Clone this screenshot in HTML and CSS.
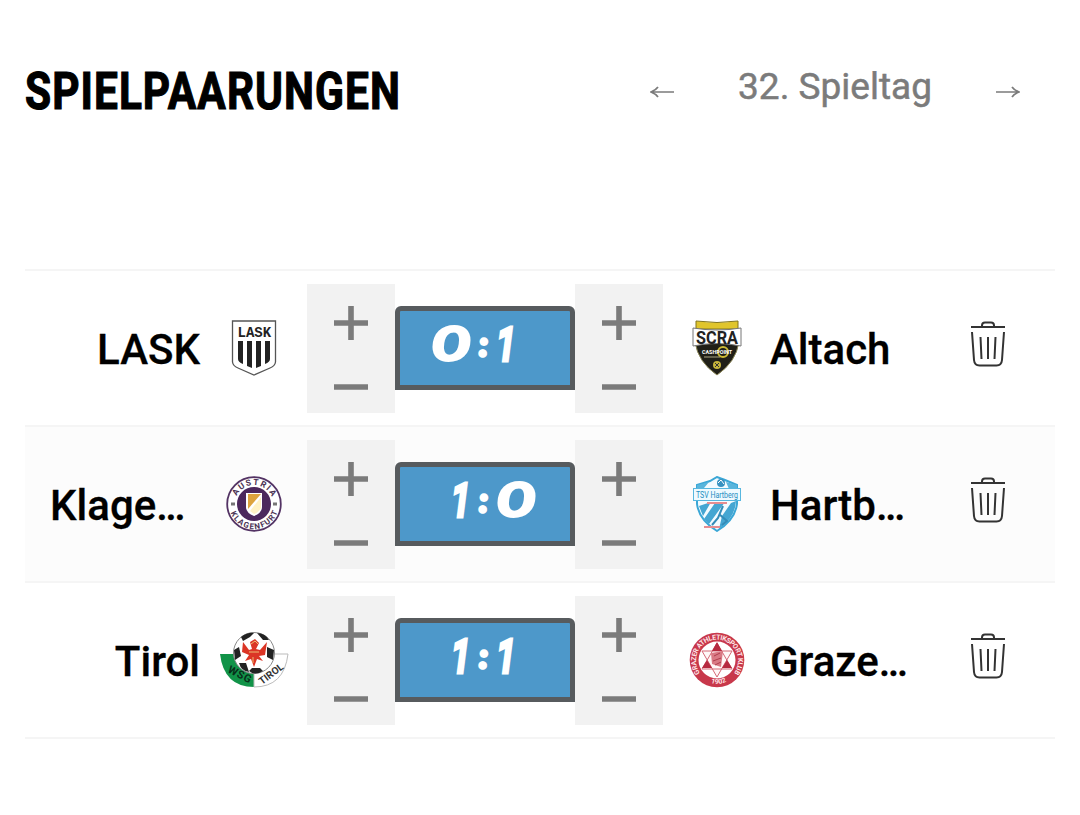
FILE: index.html
```
<!DOCTYPE html>
<html lang="de">
<head>
  <meta charset="UTF-8">
  <title>Spielpaarungen</title>
  <link rel="stylesheet" href="styles.css">
</head>
<body>
  <svg class="defs" width="0" height="0">
    <symbol id="plus" viewBox="0 0 34 34"><path d="M17 0V34M0 17H34" stroke="#7b7b7b" stroke-width="5.6"/></symbol>
    <symbol id="minus" viewBox="0 0 34 6"><path d="M0 3H34" stroke="#7b7b7b" stroke-width="5.6"/></symbol>
    <symbol id="trash" viewBox="0 0 36 46">
      <g fill="none" stroke="#333" stroke-width="2">
        <path d="M1 6H35M12 6V4.500Q12 1.500 15 1.500H21Q24 1.500 24 4.500V6"/>
        <path d="M2 11L4 39Q4.500 44.500 9.500 44.500H26.500Q31.500 44.500 32 39L34 11M10.500 16L11.500 38M18 16V38M25.500 16L24.500 38"/>
      </g>
    </symbol>
  </svg>

  <header class="header">
    <h1><span>SPIELPAARUNGEN</span></h1>
    <nav class="matchday">
      <svg class="arrow" viewBox="0 0 25 14"><path d="M24 7H2M8 2Q6 5 1 7Q6 9 8 12"/></svg>
      <span class="day">32. Spieltag</span>
      <svg class="arrow" viewBox="0 0 25 14"><path d="M1 7H23M17 2Q19 5 24 7Q19 9 17 12"/></svg>
    </nav>
  </header>

  <main class="games">
    <div class="game">
      <div class="team home">LASK</div>
      <svg class="logo" viewBox="0 0 70 56">
        <path d="M13.500 1H56.500V42Q56 46 51 48L35 55L19 48Q14 46 13.500 42Z" fill="#fff" stroke="#555" stroke-width="1.300"/>
        <text x="18.500" y="16.500" font-size="14" class="lask-text" fill="#222">LASK</text>
        <path d="M19 21H24V44Q19 42 19 39ZM28 21H33V48L28 46ZM37 21H42V46L37 48ZM46 21H51V39Q51 42 46 44Z" fill="#222"/>
      </svg>
      <div class="control"><button><svg class="plus"><use href="#plus"/></svg></button><button><svg class="minus"><use href="#minus"/></svg></button></div>
      <div class="score"><span class="zero left">0</span><span class="colon">:</span><span class="one">1</span></div>
      <div class="control"><button><svg class="plus"><use href="#plus"/></svg></button><button><svg class="minus"><use href="#minus"/></svg></button></div>
      <svg class="logo" viewBox="0 0 70 56">
        <path d="M14 1Q35 4 56 1V9H14Z" fill="#e0c52c" stroke="#81751d"/>
        <path d="M13 22H57Q54 42 35 55Q16 42 13 22Z" fill="#201f17" stroke="#8b8655"/>
        <path d="M11 8Q35 12 59 8V26Q35 21 11 26Z" fill="#fff" stroke="#777"/>
        <text x="14" y="24" font-size="18" textLength="42" lengthAdjust="spacingAndGlyphs" fill="#222">SCRA</text>
        <circle cx="41" cy="32" r="5" fill="none" stroke="#cdbb35" stroke-width="2"/>
        <path d="M22 37H38" stroke="#aaa684"/>
        <text x="20" y="34" font-size="6" textLength="30" lengthAdjust="spacingAndGlyphs" fill="#fff">CASHPOINT</text>
        <circle cx="35" cy="45" r="4" fill="#c7b43b"/><path d="M33 43L37 47M37 43L33 47" stroke="#333"/>
      </svg>
      <div class="team away">Altach</div>
      <button class="delete"><svg><use href="#trash"/></svg></button>
    </div>

    <div class="game">
      <div class="team home cut">Klage<span class="dots">...</span></div>
      <svg class="logo" viewBox="0 0 70 56">
        <defs>
          <path id="klag-top" d="M16 28A19 19 0 0 1 54 28"/>
          <path id="klag-bottom" d="M10 28A25 25 0 0 0 60 28"/>
        </defs>
        <circle cx="35" cy="28" r="26.800" fill="#fff" stroke="#533364" stroke-width="1.800"/>
        <circle cx="35" cy="28" r="17" fill="#4c285d"/>
        <path d="M27 17H43V31Q43 37 35 40Q27 37 27 31Z" fill="#fff"/>
        <path d="M29 18H42L29 33Z" fill="#dda33e"/><path d="M31 35L42 21V32Q39 37 35 38Z" fill="#fff2c5"/>
        <g font-size="8.500" fill="#4c3454">
          <text><textPath href="#klag-top" startOffset="8" textLength="44">AUSTRIA</textPath></text>
          <text font-size="8"><textPath href="#klag-bottom" startOffset="9" textLength="61">KLAGENFURT</textPath></text>
        </g>
        <path d="M12 28H16M54 28H58" stroke="#777" stroke-width="3"/>
      </svg>
      <div class="control"><button><svg class="plus"><use href="#plus"/></svg></button><button><svg class="minus"><use href="#minus"/></svg></button></div>
      <div class="score"><span class="one left">1</span><span class="colon">:</span><span class="zero">0</span></div>
      <div class="control"><button><svg class="plus"><use href="#plus"/></svg></button><button><svg class="minus"><use href="#minus"/></svg></button></div>
      <svg class="logo" viewBox="0 0 70 56">
        <path d="M15 9L28 5L35 1L43 4L55 9V28Q53 44 35 55Q17 44 15 28Z" fill="#f3fbff" stroke="#3ba7d6" stroke-width="2"/>
        <path d="M15 9L27 6L22 12H15ZM44 6L55 9V13H47Z" fill="#59b5dc"/>
        <circle cx="39" cy="7" r="4" fill="#3792c1"/><path d="M36 7L39 4L42 8" stroke="#fff" fill="none"/>
        <path d="M17 30L29 26L21 40ZM33 27L43 26L27 48L22 43ZM49 27L54 25Q53 42 37 53L40 40Z" fill="#45a6d2"/>
        <path d="M41 30L36 42L30 49M37 38L45 45L40 49" fill="none" stroke="#348cb8" stroke-width="2"/>
        <rect x="11.500" y="12.500" width="47" height="12" fill="#eefaff" stroke="#58b7df"/>
        <text x="14" y="22" font-size="8.500" textLength="42" lengthAdjust="spacingAndGlyphs" class="regular" fill="#238dc1">TSV Hartberg</text>
        <path d="M25 27H45M22 51H38" stroke="#e58d91" stroke-width="1.800"/>
      </svg>
      <div class="team away">Hartb<span class="dots">...</span></div>
      <button class="delete"><svg><use href="#trash"/></svg></button>
    </div>

    <div class="game">
      <div class="team home">Tirol</div>
      <svg class="logo" viewBox="0 0 70 56">
        <path d="M1 22H35V55Q5 55 1 22Z" fill="#119348"/>
        <path d="M35 22H69Q65 55 35 55Z" fill="#fff" stroke="#bbb"/>
        <circle cx="35" cy="21" r="20.500" fill="#fff" stroke="#888"/>
        <path d="M22 5Q29 0 35 1L31 5L24 9ZM38 1Q46 1 50 8L44 8ZM15 18L20 15L22 24L16 28ZM48 15L55 18L54 28L48 25ZM20 31L27 31L30 40Q22 39 20 31ZM33 36L41 36L44 39Q36 44 30 39Z" fill="#222"/>
        <path d="M24 10L30 18L33 17L31 10L36 7L40 11L37 17L41 18L48 10L46 23L40 24L44 29L38 27L35 35L32 27L26 29L30 23L23 20Z" fill="#db3525"/>
        <path d="M32 12L36 9L39 12M30 20H40M34 25V31" fill="none" stroke="#edbb70"/>
        <text x="8" y="40" font-size="11" transform="rotate(27 8 40)" textLength="25" fill="#072f1a">WSG</text>
        <text x="43" y="53" font-size="10" transform="rotate(-37 43 53)" textLength="28" fill="#333">TIROL</text>
      </svg>
      <div class="control"><button><svg class="plus"><use href="#plus"/></svg></button><button><svg class="minus"><use href="#minus"/></svg></button></div>
      <div class="score"><span class="one left">1</span><span class="colon">:</span><span class="one">1</span></div>
      <div class="control"><button><svg class="plus"><use href="#plus"/></svg></button><button><svg class="minus"><use href="#minus"/></svg></button></div>
      <svg class="logo" viewBox="0 0 70 56">
        <defs><path id="gak-ring" d="M18 41A21 21 0 1 1 52 41"/><path id="gak-year" d="M20 46Q35 58 50 46"/></defs>
        <circle cx="35" cy="28" r="27.300" fill="#c8384b"/>
        <circle cx="35" cy="28" r="18.500" fill="#fff"/>
        <path d="M35 11L50 37H20ZM35 45L20 19H50Z" fill="#fff7f7" stroke="#d46876"/>
        <path d="M35 10L40 19H30ZM20 36L25 28L30 36ZM40 36L45 28L50 36Z" fill="#b62a40"/>
        <path d="M29 21L41 19L39 35L30 32Z" fill="#d97984"/>
        <path d="M32 24L38 21M31 29L39 26M33 33L39 30" stroke="#ae3d4d"/>
        <g font-size="7" fill="#ffe6e8"><text><textPath href="#gak-ring" textLength="92">GRAZER ATHLETIKSPORT KLUB</textPath></text><text><textPath href="#gak-year" startOffset="10">1902</textPath></text></g>
      </svg>
      <div class="team away">Graze<span class="dots">...</span></div>
      <button class="delete"><svg><use href="#trash"/></svg></button>
    </div>
  </main>
</body>
</html>
```
FILE: styles.css
```
* {
  box-sizing: border-box;
}
body {
  margin: 0;
  padding: 0 25px;
  background: #fff;
  color: #000;
  font-family: Roboto, sans-serif;
}
.defs {
  display: block;
}
.header {
  display: flex;
  justify-content: space-between;
  height: 269px;
  padding-top: 61px;
}
h1 {
  width: 380px;
  margin: 0;
  font-size: 52px;
  line-height: 62px;
  font-weight: 700;
}
h1 span {
  display: inline-block;
  transform: scaleX(.815);
  transform-origin: left;
  letter-spacing: 1.3px;
  -webkit-text-stroke: 1.2px #000;
}
.matchday {
  display: flex;
  align-items: center;
  justify-content: space-between;
  width: 370px;
  height: 62px;
  margin-right: 35px;
}
.arrow {
  width: 25px;
  height: 14px;
  fill: none;
  stroke: #7b7b7b;
  stroke-width: 1.7;
}
.day {
  color: #7b7b7b;
  font-size: 37px;
  line-height: 52px;
  padding-bottom: 10px;
  -webkit-text-stroke: .5px #7b7b7b;
}
.game {
  display: grid;
  grid-template-columns: 175px 107px 88px 180px 88px 107px 165px 106px;
  align-items: center;
  height: 156px;
  border-top: 2px solid #f5f5f5;
}
.game:nth-child(even) {
  background: #fcfcfc;
}
.game:last-child {
  height: 158px;
  border-bottom: 2px solid #f5f5f5;
}
.team {
  font-size: 42px;
  line-height: 50px;
  font-weight: 500;
  padding-top: 3px;
  white-space: nowrap;
  -webkit-text-stroke: .3px #000;
}
.home {
  text-align: right;
}
.cut {
  text-align: left;
  padding-left: 25px;
}
.dots {
  letter-spacing: -2.6px;
}
.logo {
  width: 70px;
  height: 56px;
  justify-self: center;
  font-family: Roboto, sans-serif;
  font-weight: 700;
}
.lask-text {
  font-family: "Liberation Mono", monospace;
}
.regular {
  font-weight: 400;
}
button {
  border: 0;
  padding: 0;
  background: none;
}
.control {
  display: flex;
  flex-direction: column;
  height: 129px;
  background: #f2f2f2;
}
.control button {
  display: flex;
  align-items: center;
  justify-content: center;
  height: 78px;
}
.control button + button {
  height: 51px;
}
.plus {
  width: 34px;
  height: 34px;
}
.minus {
  width: 34px;
  height: 6px;
}
.score {
  display: grid;
  grid-template-columns: 70px 27px 73px;
  align-items: center;
  height: 84px;
  border: 5px solid #575b5e;
  border-radius: 6px 6px 0 0;
  background: #4d98ca;
  color: #fff;
  font-family: Lato, sans-serif;
  font-size: 47px;
  line-height: 60px;
  font-style: italic;
  font-weight: 400;
  padding-bottom: 9px;
}
.score span {
  -webkit-text-stroke: 4px #fff;
  stroke-linejoin: round;
  transform-origin: left;
}
.score .left {
  justify-self: end;
  transform-origin: right;
}
.zero {
  transform: scaleX(1.4);
}
/* Lato sits lower than Roboto, lift it onto the same line */
.score .zero {
  padding-bottom: 3px;
}
.one {
  font-family: Roboto, sans-serif;
  font-size: 44px;
  padding-top: 2px;
  transform: scaleX(.76);
}
.score .one {
  -webkit-text-stroke: 5px #fff;
}
.score .colon {
  justify-self: center;
  font-size: 32px;
  line-height: 40px;
  font-weight: 900;
  -webkit-text-stroke: 3.5px #fff;
}
.delete {
  display: flex;
  justify-content: center;
  padding-bottom: 8px;
}
.delete svg {
  width: 36px;
  height: 46px;
}
```
